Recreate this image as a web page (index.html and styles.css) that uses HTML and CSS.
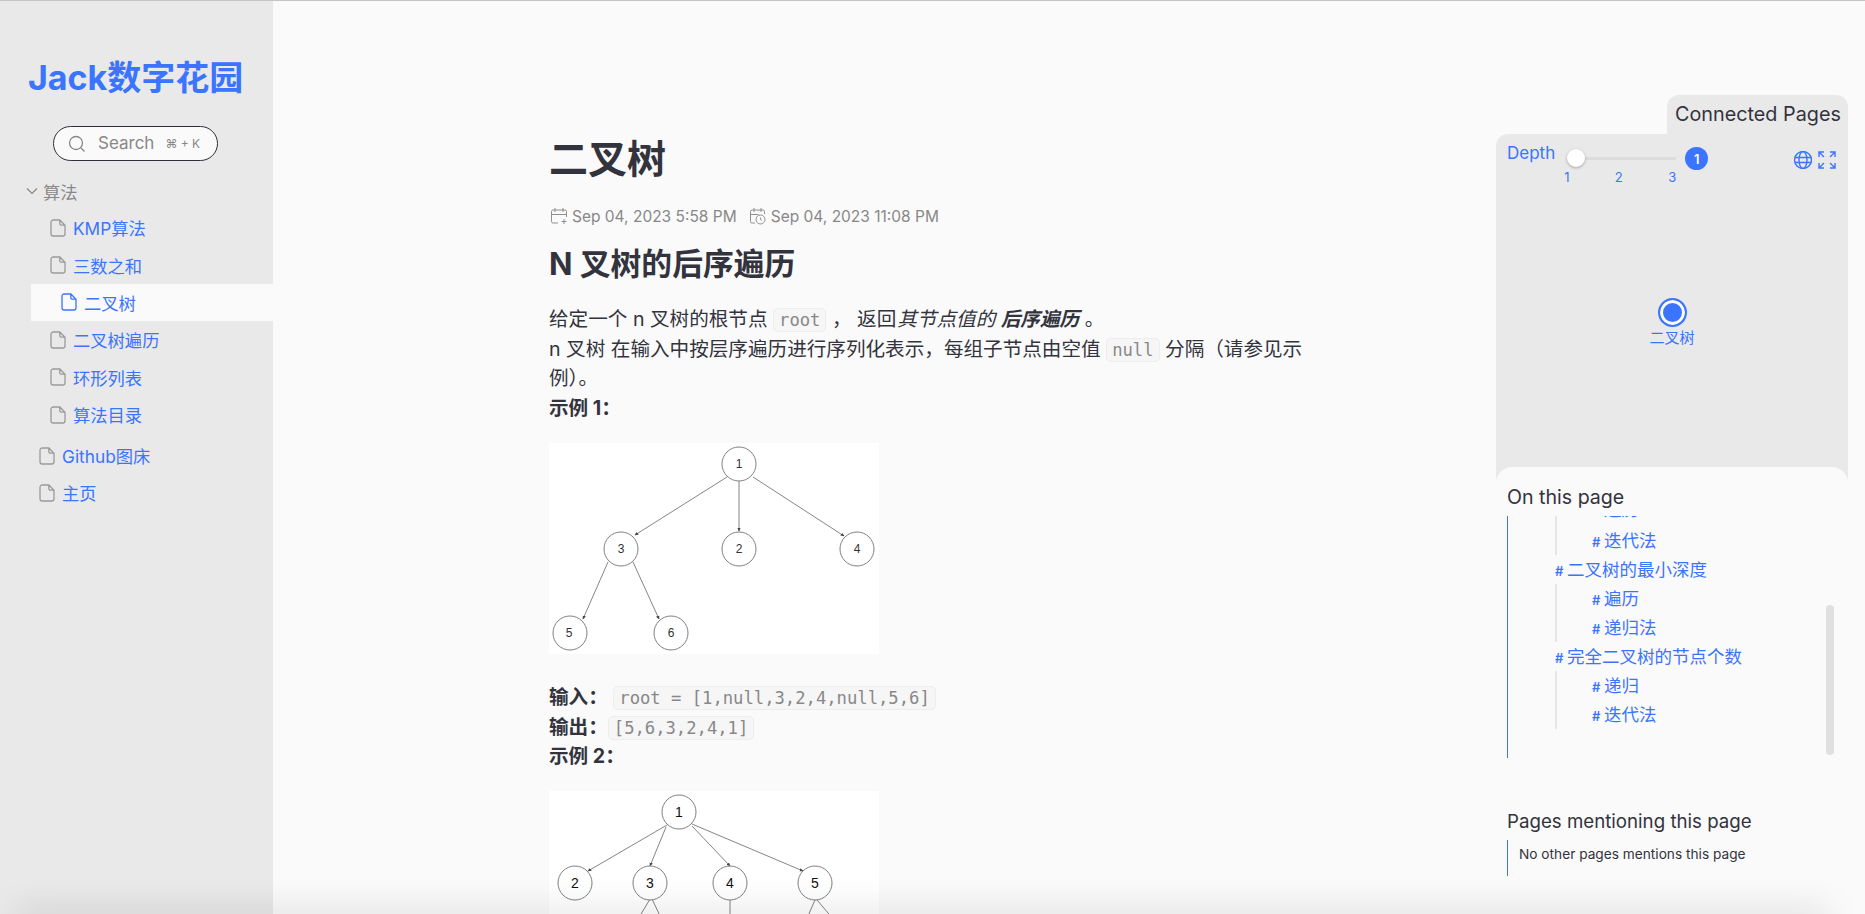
FILE: index.html
```html
<!DOCTYPE html>
<html lang="zh">
<head>
<meta charset="utf-8">
<title>二叉树</title>
<link rel="stylesheet" href="styles.css">
</head>
<body>
<svg class="defs" width="0" height="0">
  <symbol id="file" viewBox="0 0 16 18"><path d="M3.2 1h6.6L15 6.2v8.6a2.2 2.2 0 0 1-2.2 2.2H3.2A2.2 2.2 0 0 1 1 14.800V3.200A2.200 2.200 0 0 1 3.200 1z M9.800 1v3.400a1.800 1.800 0 0 0 1.800 1.800H15"/></symbol>
  <marker id="arrow" viewBox="0 0 6 6" refX="5" refY="3" markerWidth="5" markerHeight="5" orient="auto"><path d="M0 0.500L6 3L0 5.500z" fill="#444"/></marker>
</svg>
<div class="app">
  <aside class="sidebar">
    <h1 class="brand">Jack数字花园</h1>
    <div class="search">
      <svg class="search-icon" viewBox="0 0 18 18"><circle cx="8" cy="8" r="6.500"/><path d="M13 13l3.500 3.500"/></svg>
      <span class="search-label">Search</span>
      <span class="search-key">⌘ + K</span>
    </div>
    <div class="tree-group">
      <svg class="chev" viewBox="0 0 12 8"><path d="M1 1.500l5 5 5-5"/></svg>
      <span>算法</span>
    </div>
    <ul class="tree tree-nested">
      <li class="tree-item"><svg class="file"><use href="#file"/></svg><a>KMP算法</a></li>
      <li class="tree-item"><svg class="file"><use href="#file"/></svg><a>三数之和</a></li>
      <li class="tree-item active"><svg class="file"><use href="#file"/></svg><a>二叉树</a></li>
      <li class="tree-item"><svg class="file"><use href="#file"/></svg><a>二叉树遍历</a></li>
      <li class="tree-item"><svg class="file"><use href="#file"/></svg><a>环形列表</a></li>
      <li class="tree-item"><svg class="file"><use href="#file"/></svg><a>算法目录</a></li>
    </ul>
    <ul class="tree tree-root">
      <li class="tree-item"><svg class="file"><use href="#file"/></svg><a>Github图床</a></li>
      <li class="tree-item"><svg class="file"><use href="#file"/></svg><a>主页</a></li>
    </ul>
  </aside>

  <main class="article">
    <h1 class="title">二叉树</h1>
    <div class="meta">
      <svg class="meta-icon" viewBox="0 0 18 18"><path d="M8 16H3a1.500 1.500 0 0 1-1.500-1.500V4.500A1.500 1.500 0 0 1 3 3h12a1.500 1.500 0 0 1 1.500 1.500V10M1.500 7.500h15M5 1v4M13 1v4M14 12v5M11.500 14.500h5"/></svg>
      <span>Sep 04, 2023 5:58 PM</span>
      <svg class="meta-icon meta-icon-b" viewBox="0 0 18 18"><path d="M6 16H3a1.500 1.500 0 0 1-1.500-1.500V4.500A1.500 1.500 0 0 1 3 3h11a1.500 1.500 0 0 1 1.500 1.500V7M1.500 7.500h8M5 1v4M12 1v4"/><circle cx="11.500" cy="12.500" r="4.500"/><path d="M11.500 10.500v2l1.300 1"/></svg>
      <span>Sep 04, 2023 11:08 PM</span>
    </div>
    <h2 class="heading">N 叉树的后序遍历</h2>
    <p class="para">给定一个 n 叉树的根节点 <code>root</code> ， 返回<em class="lead">其节点值的 <strong>后序遍历</strong></em> 。<br>n 叉树 在输入中按层序遍历进行序列化表示，每组子节点由空值 <code>null</code> 分隔（请参见示例）。<br><strong>示例 1：</strong></p>
    <svg class="figure" viewBox="0 0 330 211">
      <g class="edges">
        <line x1="178" y1="34" x2="86" y2="92" marker-end="url(#arrow)"/>
        <line x1="190" y1="38" x2="190" y2="88" marker-end="url(#arrow)"/>
        <line x1="204" y1="34" x2="295" y2="93" marker-end="url(#arrow)"/>
        <line x1="59" y1="119" x2="34" y2="176" marker-end="url(#arrow)"/>
        <line x1="84" y1="119" x2="110" y2="176" marker-end="url(#arrow)"/>
      </g>
      <g class="nodes">
        <circle cx="190" cy="21" r="17"/><circle cx="72" cy="106" r="17"/><circle cx="190" cy="106" r="17"/><circle cx="308" cy="106" r="17"/><circle cx="21" cy="190" r="17"/><circle cx="122" cy="190" r="17"/>
      </g>
      <g class="labels">
        <text x="190" y="25">1</text><text x="72" y="110">3</text><text x="190" y="110">2</text><text x="308" y="110">4</text><text x="20" y="194">5</text><text x="122" y="194">6</text>
      </g>
    </svg>
    <p class="para para-io"><strong>输入：</strong> <code>root = [1,null,3,2,4,null,5,6]</code><br><strong>输出：</strong><code>[5,6,3,2,4,1]</code><br><strong>示例 2：</strong></p>
    <svg class="figure figure-b" viewBox="0 0 330 300">
      <g class="edges">
        <line x1="118" y1="34" x2="39" y2="80" marker-end="url(#arrow)"/>
        <line x1="117" y1="36" x2="101" y2="75" marker-end="url(#arrow)"/>
        <line x1="143" y1="35" x2="181" y2="75" marker-end="url(#arrow)"/>
        <line x1="143" y1="33" x2="254" y2="80" marker-end="url(#arrow)"/>
        <line x1="101" y1="108" x2="76" y2="150"/>
        <line x1="103" y1="108" x2="123" y2="150"/>
        <line x1="181" y1="109" x2="181" y2="160"/>
        <line x1="266" y1="109" x2="248" y2="150"/>
        <line x1="268" y1="109" x2="303" y2="150"/>
      </g>
      <g class="nodes">
        <circle cx="130" cy="21" r="17"/><circle cx="26" cy="92" r="17"/><circle cx="101" cy="92" r="17"/><circle cx="181" cy="92" r="17"/><circle cx="266" cy="92" r="17"/>
      </g>
      <g class="labels labels-dark">
        <text x="130" y="26">1</text><text x="26" y="97">2</text><text x="101" y="97">3</text><text x="181" y="97">4</text><text x="266" y="97">5</text>
      </g>
    </svg>
  </main>

  <aside class="rail">
    <div class="tab">Connected Pages</div>
    <section class="graph">
      <div class="depth">
        <span class="depth-label">Depth</span>
        <div class="slider">
          <div class="track"><span class="thumb"></span></div>
          <div class="ticks"><span>1</span><span>2</span><span>3</span></div>
        </div>
        <span class="badge">1</span>
        <div class="graph-tools">
          <svg class="tool" viewBox="1 1 18 18"><circle cx="10" cy="10" r="8.500"/><ellipse cx="10" cy="10" rx="4" ry="8.500"/><path d="M2 7.500h16M2 12.500h16"/></svg>
          <svg class="tool" viewBox="1 1 18 18"><path d="M2 7V2h5M2 2l5 5M13 2h5v5M18 2l-5 5M2 13v5h5M2 18l5-5M18 13v5h-5M18 18l-5-5"/></svg>
        </div>
      </div>
      <div class="node-wrap">
        <span class="node"></span>
        <span class="node-label">二叉树</span>
      </div>
    </section>
    <section class="outline">
      <h3 class="outline-title">On this page</h3>
      <div class="toc">
        <ul class="toc-list">
          <li class="toc-sub"><ul>
            <li class="toc-row toc-row-clipped"><span class="hash hash-clipped">#</span>遍历</li>
            <li class="toc-row"><span class="hash">#</span>迭代法</li>
          </ul></li>
          <li class="toc-row"><span class="hash">#</span>二叉树的最小深度</li>
          <li class="toc-sub"><ul>
            <li class="toc-row"><span class="hash">#</span>遍历</li>
            <li class="toc-row"><span class="hash">#</span>递归法</li>
          </ul></li>
          <li class="toc-row"><span class="hash">#</span>完全二叉树的节点个数</li>
          <li class="toc-sub"><ul>
            <li class="toc-row"><span class="hash">#</span>递归</li>
            <li class="toc-row"><span class="hash">#</span>迭代法</li>
          </ul></li>
        </ul>
        <span class="scroll-thumb"></span>
      </div>
      <h3 class="mention-title">Pages mentioning this page</h3>
      <p class="mention-body">No other pages mentions this page</p>
    </section>
  </aside>
</div>
<div class="bottom-shade"></div>
</body>
</html>
```
FILE: styles.css
```css
* { box-sizing: border-box; }
html, body { margin: 0; height: 914px; overflow: hidden; }
body {
  position: relative;
  background: #fafafa;
  color: #33333d;
  font-family: Inter, "Noto Sans CJK SC", sans-serif;
  border-top: 1px solid #c4c4c4;
}
ul { list-style: none; margin: 0; padding: 0; }
.defs { position: absolute; }
.app { display: grid; grid-template-columns: 273px 1fr 352px; height: 913px; padding-right: 17px; }

/* sidebar */
.sidebar { background: #e9e9ea; padding-top: 54px; }
.brand { margin: 0 0 0 28px; font-size: 34px; line-height: 46px; font-weight: 700; color: #3b74ff; white-space: nowrap; }
.search { display: flex; align-items: center; width: 165px; height: 35px; margin: 25px 0 0 53px; border: 1px solid #2f2f3a; border-radius: 18px; background: #fafafa; color: #888; }
.search-icon { width: 18px; height: 18px; margin-left: 14px; fill: none; stroke: #888; stroke-width: 1.300; }
.search-label { margin: -2px 0 0 12px; font-size: 17px; }
.search-key { margin: -1px 0 0 11px; font-size: 12px; }
.tree-group { display: flex; align-items: center; gap: 5px; margin: 15px 0 0 26px; height: 30px; font-size: 17.300px; color: #888; }
.chev { width: 12px; height: 8px; fill: none; stroke: #888; stroke-width: 1.200; }
.tree-item { display: flex; align-items: center; height: 37.400px; font-size: 17.300px; color: #3b74ff; white-space: nowrap; }
.tree-nested { margin-top: 3px; }
.tree-nested .tree-item { padding-left: 50px; }
.tree-nested .tree-item.active { margin-left: 31px; padding-left: 30px; background: #fafafa; }
.tree-root { margin-top: 3.500px; }
.tree-root .tree-item { padding-left: 39px; }
.file { width: 16px; height: 18px; margin-right: 7px; fill: none; stroke: #9a9a9a; stroke-width: 1.300; flex: none; }
.active .file { stroke: #3b74ff; }

/* article */
.article { padding: 135px 0 0 277px; min-width: 0; overflow: hidden; height: 913px; }
.title { margin: 0 0 0 -1px; font-size: 39px; line-height: 46px; font-weight: 700; }
.meta { display: flex; align-items: center; margin-top: 23px; height: 22px; font-size: 15.500px; color: #888; }
.meta-icon { width: 18px; height: 18px; margin-right: 4px; fill: none; stroke: #8f8f8f; stroke-width: 1; flex: none; }
.meta-icon-b { margin-left: 12px; }
.heading { margin: 16px 0 0 -1px; font-size: 30.800px; line-height: 42px; font-weight: 700; }
.para { width: 762px; margin: 20px 0 0 -1px; font-size: 19.600px; line-height: 29.600px; }
.para strong { font-weight: 700; }
.lead { margin-left: 1px; }
code { padding: 1px 5px; border: 1px solid #ededed; border-radius: 5px; background: #f6f6f6; color: #888; font-family: "DejaVu Sans Mono", monospace; font-size: 17.200px; line-height: 1; }
.figure { display: block; width: 330px; height: 211px; margin: 20px 0 0 -1px; background: #fff; }
.figure-b { height: 300px; margin-top: 20px; }
.para-io { margin-top: 29px; line-height: 29.300px; }
.edges line { stroke: #666; stroke-width: 0.800; }
.nodes circle { fill: #fff; stroke: #808080; stroke-width: 1; }
.labels text { font-family: "Liberation Sans", sans-serif; font-size: 12px; text-anchor: middle; fill: #333; }
.labels-dark text { font-size: 14px; fill: #111; }

/* right rail */
.rail { display: flex; flex-direction: column; padding-top: 94px; }
.tab { align-self: flex-end; width: 181px; height: 39px; padding: 5px 0 0 8px; border-radius: 12px 12px 0 0; background: #e9e9ea; font-size: 19.800px; line-height: 28px; white-space: nowrap; }
.graph { height: 353px; padding: 9px 11px 0; border-radius: 12px 0 0 0; background: #e9e9ea; }
.depth { display: flex; align-items: flex-start; color: #3b74ff; }
.depth-label { font-size: 17px; line-height: 20px; }
.slider { width: 112px; margin: 14px 0 0 9px; }
.track { position: relative; width: 100px; height: 3px; margin-left: 12px; background: #dcdcdc; }
.thumb { position: absolute; left: -9px; top: -8px; width: 18px; height: 18px; border-radius: 50%; background: #fff; box-shadow: 0 1px 3px rgba(0,0,0,.3); }
.ticks { display: flex; justify-content: space-between; width: 112px; margin-top: 8.500px; font-size: 13px; line-height: 16px; }
.badge { display: flex; align-items: center; justify-content: center; width: 23px; height: 23px; margin: 4px 0 0 9px; border-radius: 50%; background: #3b74ff; color: #fff; font-size: 13px; font-weight: 600; }
.graph-tools { display: flex; gap: 6px; margin: 8px 1px 0 auto; }
.tool { width: 18px; height: 18px; fill: none; stroke: #3b74ff; stroke-width: 1.400; }
.node-wrap { display: flex; flex-direction: column; align-items: center; margin-top: 113px; }
.node { width: 29px; height: 29px; border: 2px solid #3b74ff; border-radius: 50%; background: #3b74ff; box-shadow: inset 0 0 0 3px #fafafa; }
.node-label { margin-top: 0; font-size: 15px; line-height: 22px; color: #3b74ff; }
.outline { flex: 1; margin-top: -20px; padding: 0 11px; border-radius: 16px 16px 0 0; background: #fafafa; position: relative; }
.outline-title { margin: 0; padding-top: 15px; font-size: 19.600px; line-height: 30px; font-weight: 400; }
.toc { position: relative; height: 242px; margin-top: 4px; overflow: hidden; border-left: 1px solid #3b74ff; color: #3b74ff; font-size: 17.500px; }
.toc-list { margin: -19px 0 0 47px; }
.toc-row { height: 29px; line-height: 29px; white-space: nowrap; }
.toc-row-clipped { line-height: 25px; }
.hash-clipped { visibility: hidden; }
.toc-sub { border-left: 2px solid #e6e6e6; padding-left: 35px; }
.hash { display: inline-block; width: 12px; font-size: 13px; font-weight: 600; }
.scroll-thumb { position: absolute; left: 318px; top: 89px; width: 8px; height: 150px; border-radius: 4px; background: #e0e0e0; }
.mention-title { margin: 49px 0 0; font-size: 18.700px; line-height: 30px; font-weight: 400; white-space: nowrap; }
.mention-body { margin: 3px 0 0; height: 36px; padding: 4px 0 0 11px; border-left: 1px solid #3b74ff; font-size: 13.700px; line-height: 20px; }

.bottom-shade { position: absolute; left: 20px; right: 40px; top: 913px; height: 12px; box-shadow: 0 0 34px 4px rgba(0,0,0,.13); pointer-events: none; }
```
